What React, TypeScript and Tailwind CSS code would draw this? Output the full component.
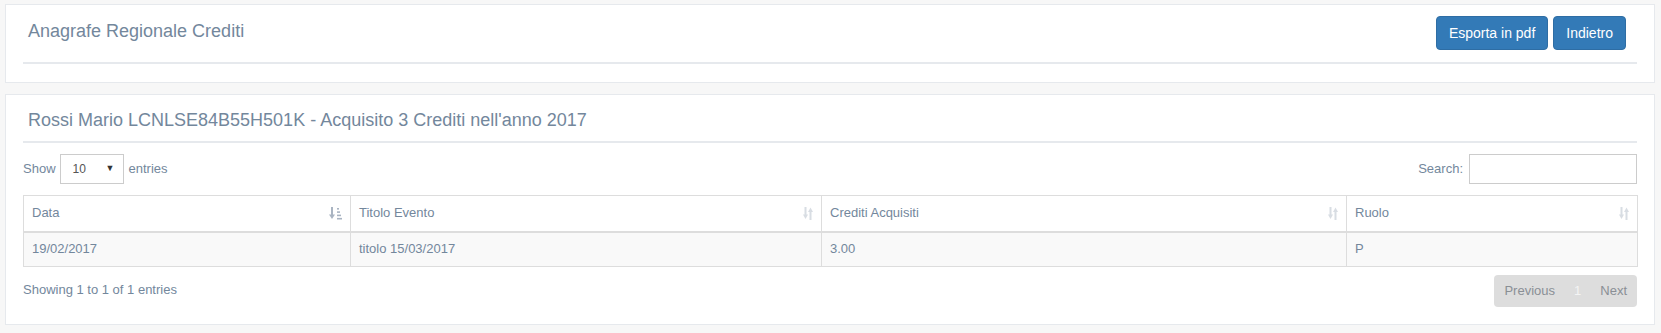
const columns = [
  { label: "Data", width: "w-[327px]", sort: "asc" },
  { label: "Titolo Evento", width: "w-[471px]", sort: "both" },
  { label: "Crediti Acquisiti", width: "w-[525px]", sort: "both" },
  { label: "Ruolo", width: "w-[291px]", sort: "both" },
];

const rows = [["19/02/2017", "titolo 15/03/2017", "3.00", "P"]];

function SortAsc() {
  return (
    <svg width="13" height="13" viewBox="0 0 13 13" className="text-[#a9b4c2]">
      <rect x="2" y="0" width="2" height="8" fill="currentColor" />
      <path d="M0 7.5 L6 7.5 L3 12 Z" fill="currentColor" />
      <rect x="8" y="1" width="2" height="1.6" fill="currentColor" />
      <rect x="8" y="4.3" width="3" height="1.6" fill="currentColor" />
      <rect x="8" y="7.6" width="4" height="1.6" fill="currentColor" />
      <rect x="8" y="10.9" width="5" height="1.6" fill="currentColor" />
    </svg>
  );
}

function SortBoth() {
  return (
    <svg width="10" height="13" viewBox="0 0 10 13" className="text-[#d8dde3]">
      <rect x="1.5" y="0" width="2" height="8" fill="currentColor" />
      <path d="M0 7.5 L5 7.5 L2.5 12 Z" fill="currentColor" />
      <rect x="6.5" y="4.5" width="2" height="8.5" fill="currentColor" />
      <path d="M5 5 L10 5 L7.5 0.5 Z" fill="currentColor" />
    </svg>
  );
}

export default function App() {
  return (
    <div className="h-[333px] overflow-hidden bg-[#f7f7f7] pt-[4px] pl-[5px] text-[13px] text-[#73879c] font-['Liberation_Sans',Arial,sans-serif]">
      {/* header panel */}
      <div className="w-[1650px] border border-[#e6e9ed] bg-white px-[17px] pt-[11px] pb-[18px]">
        <div className="flex h-[48px] items-start justify-between border-b-2 border-[#e6e9ed]">
          <h2 className="mt-[6px] pl-[5px] text-[18px] leading-[18px] font-normal">
            Anagrafe Regionale Crediti
          </h2>
          <div className="flex gap-[5px] pr-[11px]">
            <button className="h-[34px] rounded-[4px] border border-[#2e6da4] bg-[#337ab7] px-[12px] text-[14px] leading-[20px] text-white">
              Esporta in pdf
            </button>
            <button className="h-[34px] rounded-[4px] border border-[#2e6da4] bg-[#337ab7] px-[12px] text-[14px] leading-[20px] text-white">
              Indietro
            </button>
          </div>
        </div>
      </div>

      {/* table panel */}
      <div className="mt-[11px] w-[1650px] border border-[#e6e9ed] bg-white px-[17px] pt-[10px] pb-[17px]">
        <div className="h-[38px] border-b-2 border-[#e6e9ed] pt-[6px]">
          <h2 className="pl-[5px] text-[18px] leading-[18px] font-normal">
            Rossi Mario LCNLSE84B55H501K - Acquisito 3 Crediti nell'anno 2017
          </h2>
        </div>

        <div className="mt-[11px] flex h-[30px] items-center justify-between">
          <div className="flex items-center">
            <span>Show</span>
            <div className="ml-[4px] mr-[5px] flex h-[30px] w-[64px] items-center justify-between border border-[#ccc] bg-white pl-[12px] pr-[8px] text-[12px] text-[#555]">
              <span>10</span>
              <span className="text-[9px] text-[#333]">▼</span>
            </div>
            <span>entries</span>
          </div>
          <div className="flex items-center">
            <span>Search:</span>
            <div className="ml-[6px] h-[30px] w-[168px] border border-[#ccc] bg-white" />
          </div>
        </div>

        <table className="mt-[11px] w-[1614px] table-fixed border-collapse border border-[#ddd]">
          <thead>
            <tr>
              {columns.map((c) => (
                <th
                  key={c.label}
                  className={`${c.width} h-[36px] border border-b-2 border-[#ddd] px-[8px] text-left font-normal leading-[18px]`}
                >
                  <div className="flex items-center justify-between">
                    <span>{c.label}</span>
                    {c.sort === "asc" ? <SortAsc /> : <SortBoth />}
                  </div>
                </th>
              ))}
            </tr>
          </thead>
          <tbody>
            {rows.map((r, i) => (
              <tr key={i} className="bg-[#f9f9f9]">
                {r.map((v, j) => (
                  <td
                    key={j}
                    className="h-[35px] border border-[#ddd] px-[8px] leading-[18px]"
                  >
                    {v}
                  </td>
                ))}
              </tr>
            ))}
          </tbody>
        </table>

        <div className="mt-[8px] flex items-start justify-between">
          <div className="pt-[6px] leading-[18px]">Showing 1 to 1 of 1 entries</div>
          <div className="flex h-[32px] items-center rounded-[4px] bg-[#ddd] text-[13px]">
            <span className="px-[10px] text-[#8a8f95]">Previous</span>
            <span className="px-[9px] text-[#f4f4f4]">1</span>
            <span className="px-[10px] text-[#8a8f95]">Next</span>
          </div>
        </div>
      </div>
    </div>
  );
}
